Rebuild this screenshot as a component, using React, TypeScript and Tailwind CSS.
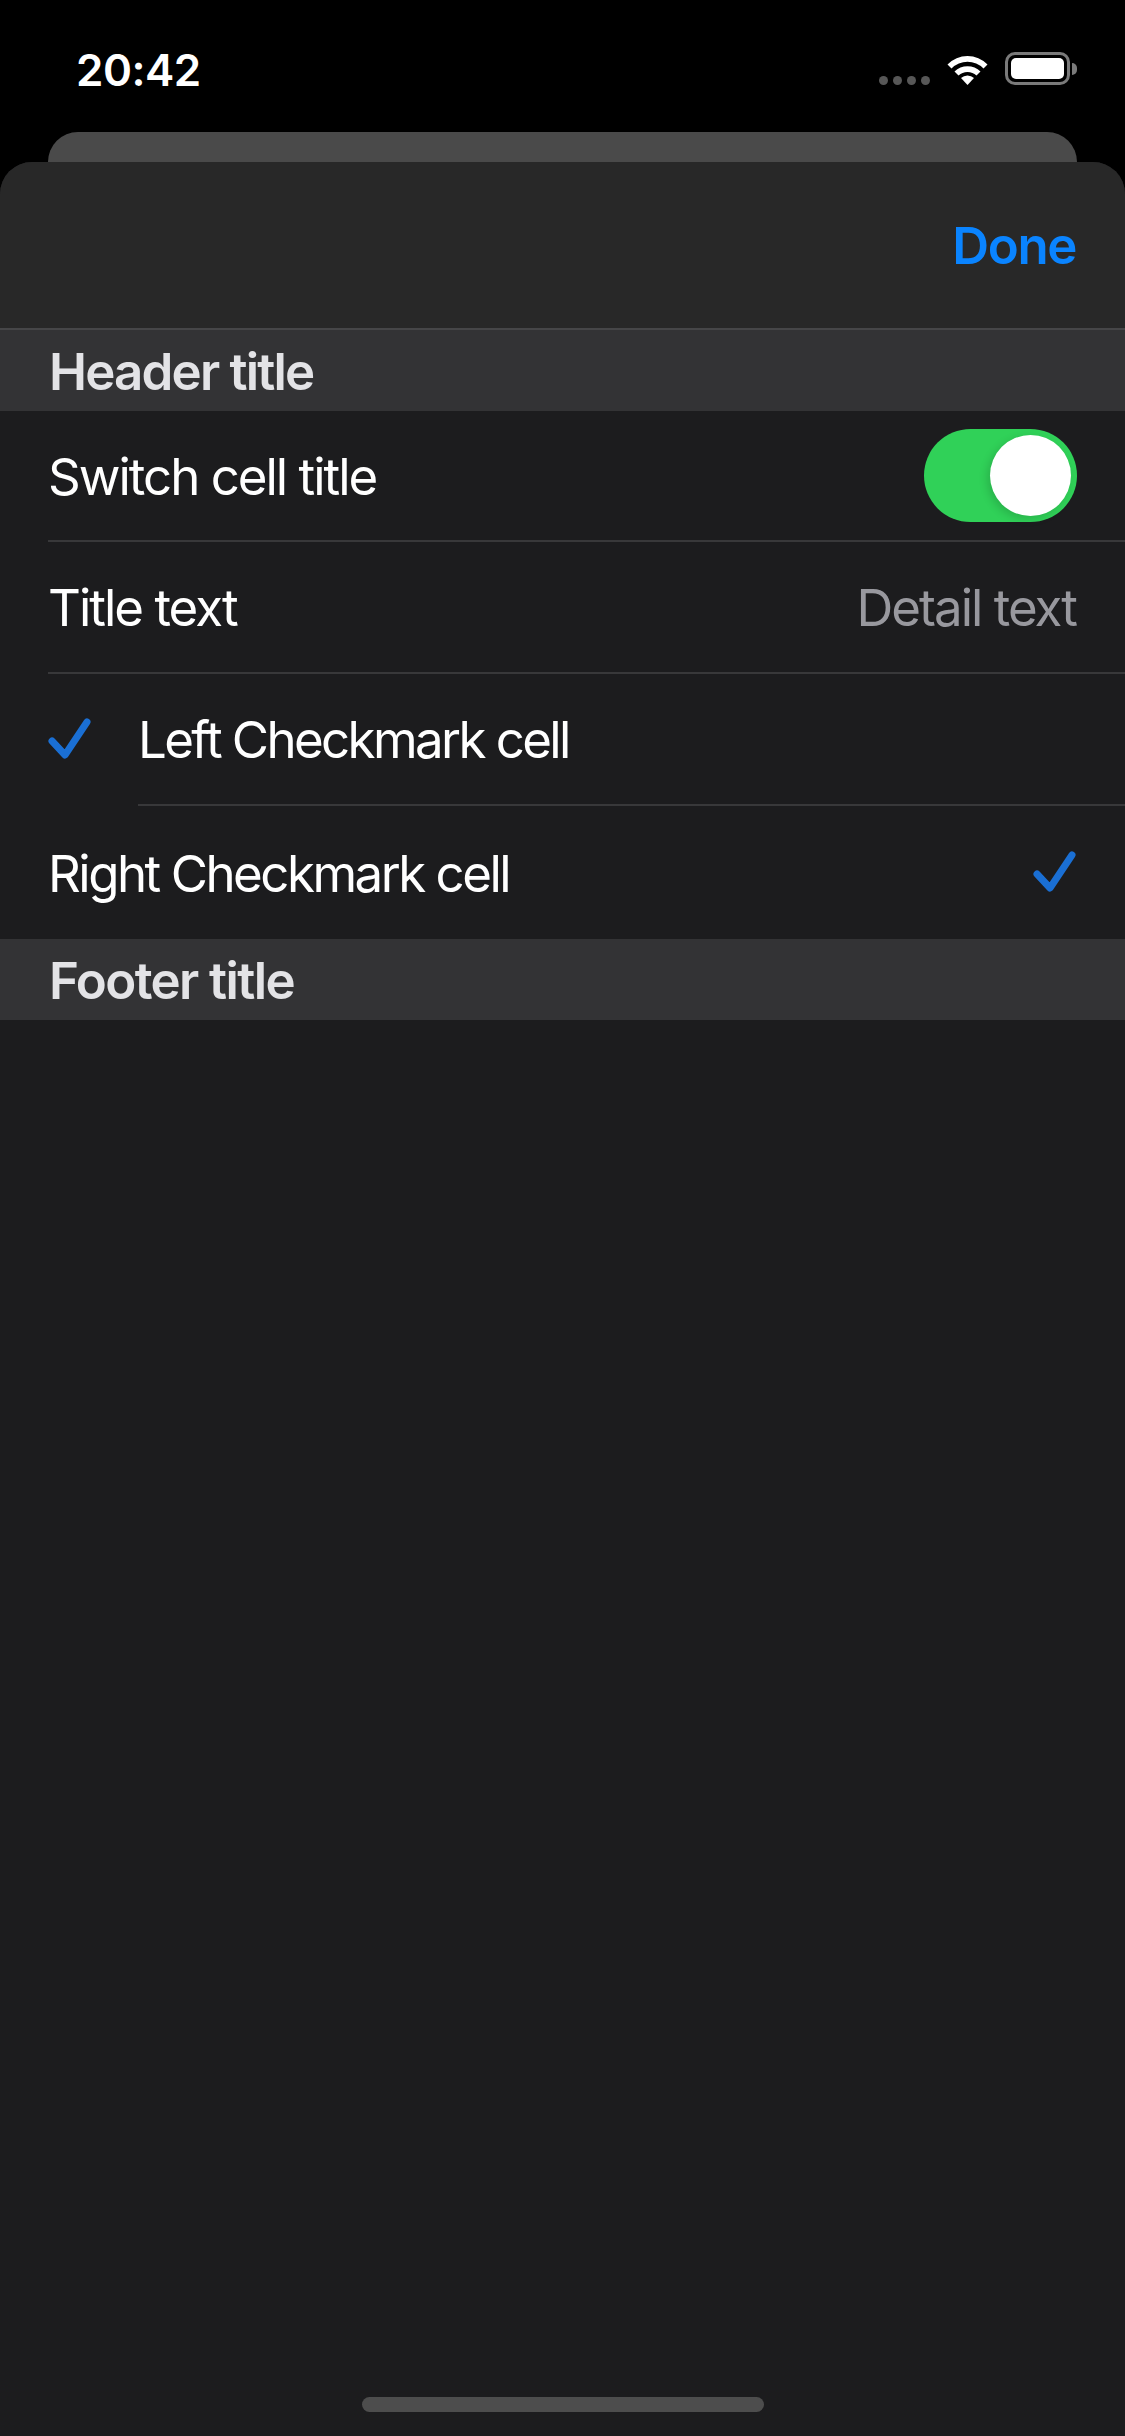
import { useState } from 'react'

const font = { fontFamily: 'Inter, "Noto Sans", sans-serif' }

function StatusBar() {
  return (
    <div className="h-[132px] flex justify-between items-start px-[48px] pt-[40px]">
      <span className="text-white text-[44px] font-semibold leading-[60px] pl-[28px] tracking-[-0.5px]">20:42</span>
      <div className="flex items-center gap-[14px] pt-[12px]">
        <div className="flex gap-[5px] items-end pt-[24px]">
          {[0, 1, 2, 3].map(i => (
            <div key={i} className="w-[9px] h-[9px] rounded-full bg-[#575757]" />
          ))}
        </div>
        <svg width="47" height="33" viewBox="0 0 47 33">
          <path d="M23.5 33 L17 26 A9.5 9.5 0 0 1 30 26 Z" fill="white" />
          <path d="M10.5 19.5 A18.5 18.5 0 0 1 36.5 19.5 L32.5 23.5 A13 13 0 0 0 14.5 23.5 Z" fill="white" />
          <path d="M3.5 12.5 A28 28 0 0 1 43.5 12.5 L39.5 16.5 A22.5 22.5 0 0 0 7.5 16.5 Z" fill="white" />
        </svg>
        <div className="flex items-center gap-[2px]">
          <div className="w-[65px] h-[33px] rounded-[10px] border-[3px] border-[#7a7a7a] p-[3px]">
            <div className="w-full h-full rounded-[5px] bg-white" />
          </div>
          <div className="w-[5px] h-[12px] rounded-r-full bg-[#7a7a7a]" />
        </div>
      </div>
    </div>
  )
}

function Check({ className = '' }: { className?: string }) {
  return (
    <svg width="44" height="44" viewBox="0 0 44 44" className={className}>
      <path d="M4 23 L17 37 L39 4" fill="none" stroke="#1a6fd4" strokeWidth="7" strokeLinecap="round" strokeLinejoin="round" />
    </svg>
  )
}

function Switch({ on, onToggle }: { on: boolean; onToggle: () => void }) {
  return (
    <button
      onClick={onToggle}
      className={`w-[153px] h-[93px] rounded-full p-[6px] flex ${on ? 'bg-[#30d158] justify-end' : 'bg-[#39393d] justify-start'}`}
    >
      <div className="w-[81px] h-[81px] rounded-full bg-white shadow-[-3px_3px_8px_rgba(0,0,0,0.15)]" />
    </button>
  )
}

export default function App() {
  const [on, setOn] = useState(true)

  return (
    <div className="w-[1125px] h-[2436px] bg-black flex flex-col overflow-hidden" style={font}>
      <StatusBar />
      <div className="mx-[48px] h-[30px] rounded-t-[30px] bg-[#4a4a4a]" />
      <div className="flex-1 flex flex-col bg-[#1c1c1e] rounded-t-[32px] overflow-hidden">
        {/* nav */}
        <div className="h-[168px] bg-[#282828] border-b-[2px] border-[#464648] flex items-center justify-end px-[49px] pt-[2px]">
          <span className="text-[#0a84ff] text-[51px] font-semibold tracking-[-1.4px]">Done</span>
        </div>

        <div className="h-[81px] bg-[#333335] flex items-center px-[49px] pt-[3px]">
          <span className="text-[#e3e3e6] text-[51px] font-semibold tracking-[-1.8px]">Header title</span>
        </div>

        <div className="pl-[48px]">
          <div className="h-[131px] flex items-center justify-between pr-[48px] border-b-[2px] border-[#38383a]">
            <span className="text-white text-[51px] tracking-[-2px] pt-[3px]">Switch cell title</span>
            <Switch on={on} onToggle={() => setOn(!on)} />
          </div>
          <div className="h-[132px] flex items-center justify-between pr-[49px] border-b-[2px] border-[#38383a] pt-[3px]">
            <span className="text-white text-[51px] tracking-[-2px]">Title text</span>
            <span className="text-[#98989e] text-[51px] tracking-[-2px]">Detail text</span>
          </div>
          <div className="h-[132px] flex items-center">
            <Check className="w-[44px]" />
            <div className="flex-1 h-full flex items-center ml-[46px] border-b-[2px] border-[#38383a] pt-[3px]">
              <span className="text-white text-[51px] tracking-[-2.6px]">Left Checkmark cell</span>
            </div>
          </div>
          <div className="h-[133px] flex items-center justify-between pr-[48px]">
            <span className="text-white text-[51px] tracking-[-2.5px] pt-[3px]">Right Checkmark cell</span>
            <Check />
          </div>
        </div>

        <div className="h-[81px] bg-[#333335] flex items-center px-[49px] pt-[3px]">
          <span className="text-[#e3e3e6] text-[51px] font-semibold tracking-[-1.6px]">Footer title</span>
        </div>

        <div className="flex-1" />
        <div className="flex justify-center pb-[24px]">
          <div className="w-[402px] h-[15px] rounded-full bg-[#4d4d4d]" />
        </div>
      </div>
    </div>
  )
}
